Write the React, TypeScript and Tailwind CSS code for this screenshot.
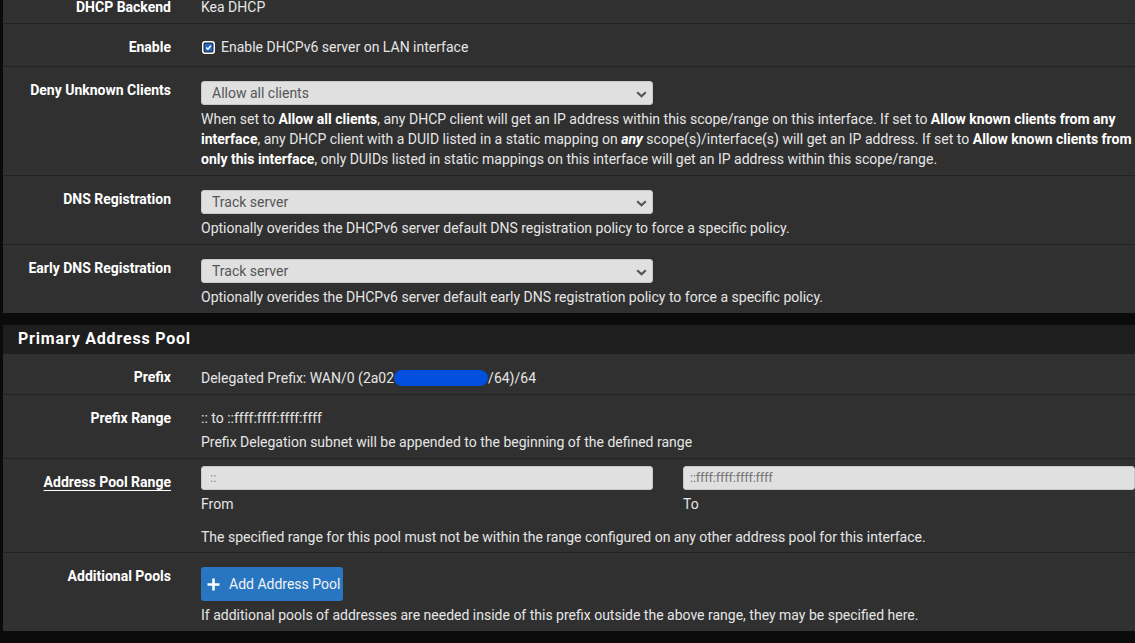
import React from 'react';

const font = { fontFamily: 'Roboto, "Liberation Sans", sans-serif' };

function Chevron() {
  return (
    <svg width="11" height="7" viewBox="0 0 11 7" className="absolute right-[5px] top-[9px]">
      <path d="M1.2 1.2 L5.5 5.3 L9.8 1.2" fill="none" stroke="#555" strokeWidth="2.2" />
    </svg>
  );
}

function Select({ value }: { value: string }) {
  return (
    <div className="relative h-[24px] w-[452px] rounded-[3px] border border-[#c8c8c8] bg-[#e0e0e0] pl-[10px] text-[14px] leading-[22px] text-[#555]">
      {value}
      <Chevron />
    </div>
  );
}

function CheckBox() {
  return (
    <svg width="13" height="13" viewBox="0 0 13 13" className="ml-[1px] mr-[6px] shrink-0">
      <rect x="0.75" y="0.75" width="11.5" height="11.5" rx="2.5" fill="#1b1b1b" stroke="#fff" strokeWidth="1.5" />
      <rect x="2.5" y="2.5" width="8" height="8" rx="1" fill="#2469c9" />
      <path d="M4.2 6.5 L5.9 8.2 L8.9 4.7" fill="none" stroke="#fff" strokeWidth="1.5" />
    </svg>
  );
}

function Row({
  label,
  children,
  last,
  className = 'pt-[14px] pb-[6px]',
  underline,
}: {
  label: string;
  children: React.ReactNode;
  last?: boolean;
  className?: string;
  underline?: boolean;
}) {
  return (
    <div className={`flex ${last ? '' : 'border-b border-[#222]'}`}>
      <div className="w-[183px] shrink-0 pr-[15px] pt-[13px] text-right text-[14px] font-bold leading-[20px] text-white">
        <span className={underline ? 'underline decoration-1 underline-offset-[3px]' : ''}>{label}</span>
      </div>
      <div className={`min-w-0 flex-1 pl-[15px] pr-[15px] ${className}`}>{children}</div>
    </div>
  );
}

function Help({ children, className = 'mt-[4px]' }: { children: React.ReactNode; className?: string }) {
  return <div className={`text-[14px] leading-[20px] text-[#e6e6e6] ${className}`}>{children}</div>;
}

export default function App() {
  return (
    <div className="h-[643px] w-[1135px] overflow-hidden bg-[#0b0b0b]" style={font}>
      <div className="ml-[3px] -mt-[16px] w-[1147px] bg-[#303030]">
        <Row label="DHCP Backend" className="pt-[13px] pb-[6px]">
          <Help className="">Kea DHCP</Help>
        </Row>
        <Row label="Enable" className="pt-[13px] pb-[9px]">
          <div className="flex items-center text-[14px] leading-[20px] text-[#e6e6e6]">
            <CheckBox />
            Enable DHCPv6 server on LAN interface
          </div>
        </Row>
        <Row label="Deny Unknown Clients">
          <Select value="Allow all clients" />
          <Help>
            When set to <b className="text-white">Allow all clients</b>, any DHCP client will get an IP address within
            this scope/range on this interface. If set to <b className="text-white">Allow known clients from any interface</b>,
            any DHCP client with a DUID listed in a static mapping on <b className="italic text-white">any</b> scope(s)/interface(s)
            will get an IP address. If set to <b className="text-white">Allow known clients from only this interface</b>, only
            DUIDs listed in static mappings on this interface will get an IP address within this scope/range.
          </Help>
        </Row>
        <Row label="DNS Registration">
          <Select value="Track server" />
          <Help>Optionally overides the DHCPv6 server default DNS registration policy to force a specific policy.</Help>
        </Row>
        <Row label="Early DNS Registration" last>
          <Select value="Track server" />
          <Help>Optionally overides the DHCPv6 server default early DNS registration policy to force a specific policy.</Help>
        </Row>
      </div>

      <div className="ml-[3px] mt-[12px] w-[1147px] bg-[#303030]">
        <div className="h-[29px] bg-[#1e1e1e] pl-[15px] text-[16px] font-bold leading-[28px] tracking-[0.05em] text-white">
          Primary Address Pool
        </div>
        <Row label="Prefix" className="pt-[13px] pb-[6px]">
          <Help className="">
            Delegated Prefix: WAN/0 (2a02
            <span className="inline-block h-[16px] w-[94px] translate-y-[3px] rounded-full bg-[#0050dd] align-baseline" />
            /64)/64
          </Help>
        </Row>
        <Row label="Prefix Range" className="pt-[13px] pb-[6px]">
          <Help className="">:: to ::ffff:ffff:ffff:ffff</Help>
          <Help>Prefix Delegation subnet will be appended to the beginning of the defined range</Help>
        </Row>
        <Row label="Address Pool Range" underline className="pt-[7px] pb-[5px]">
          <div className="flex gap-[30px]">
            <div className="w-[452px]">
              <div className="h-[24px] rounded-[3px] border border-[#c8c8c8] bg-[#e0e0e0] pl-[8px] text-[13px] leading-[21px] text-[#8a8a8a]">
                ::
              </div>
              <Help>From</Help>
            </div>
            <div className="w-[452px]">
              <div className="h-[24px] rounded-[3px] border border-[#c8c8c8] bg-[#e0e0e0] pl-[6px] text-[13px] leading-[21px] tracking-[-0.02em] text-[#777]">
                ::ffff:ffff:ffff:ffff
              </div>
              <Help>To</Help>
            </div>
          </div>
          <Help className="mt-[13px]">
            The specified range for this pool must not be within the range configured on any other address pool for this interface.
          </Help>
        </Row>
        <Row label="Additional Pools" last>
          <button className="flex h-[34px] w-[142px] items-center rounded-[3px] bg-[#2876c2] pl-[6px] text-[14px] text-[#f2f2f2]">
            <svg width="13" height="13" viewBox="0 0 13 13" className="mr-[9px]">
              <path d="M6.5 0.5 V12.5 M0.5 6.5 H12.5" stroke="#fff" strokeWidth="2.6" />
            </svg>
            Add Address Pool
          </button>
          <Help>If additional pools of addresses are needed inside of this prefix outside the above range, they may be specified here.</Help>
        </Row>
      </div>
    </div>
  );
}
